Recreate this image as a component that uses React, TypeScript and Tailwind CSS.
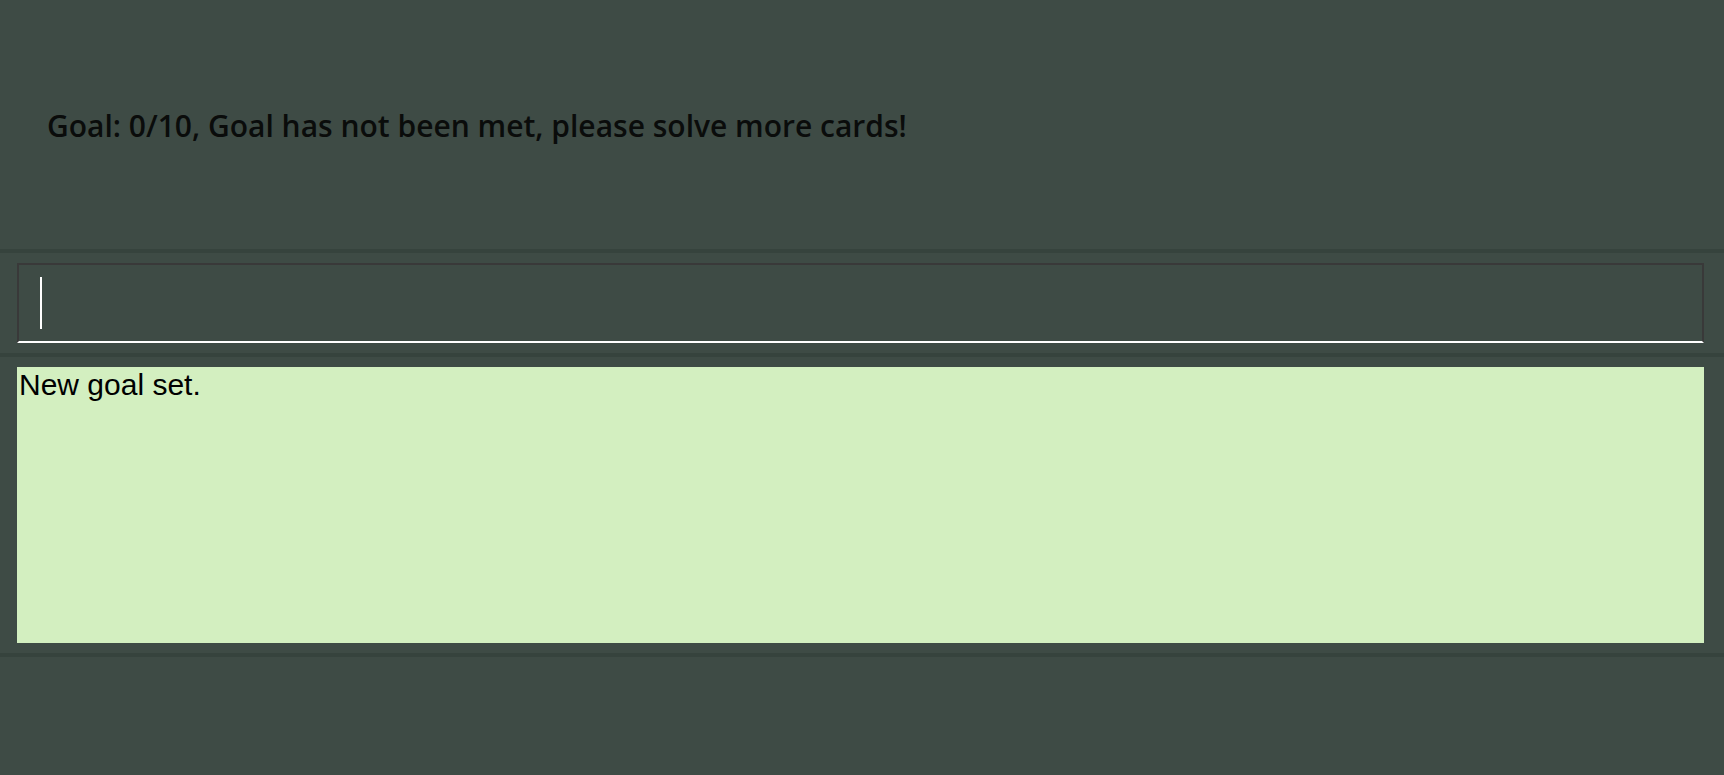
import React from 'react';

const Divider: React.FC = () => <div className="h-[4px] w-full bg-[#36433d]" />;

const App: React.FC = () => {
  return (
    <div className="flex h-[775px] w-full flex-col bg-[#3e4b45]">
      {/* goal status */}
      <div className="flex h-[249px] items-center pl-[47px] pt-[2px]">
        <h1
          className="text-[30px] font-semibold leading-none text-[#0a0c0b]"
          style={{ fontFamily: '"Open Sans", "Noto Sans", sans-serif' }}
        >
          Goal: 0/10, Goal has not been met, please solve more cards!
        </h1>
      </div>
      <Divider />

      {/* command input */}
      <div className="h-[100px] pl-[17px] pr-[20px] py-[10px]">
        <div className="relative flex h-full items-center border-x-2 border-t-2 border-b-2 border-x-[#393939] border-t-[#393939] border-b-white pl-[21px]">
          <div className="h-[52px] w-[2px] bg-white" />
        </div>
      </div>
      <Divider />

      {/* result display */}
      <div className="h-[296px] pl-[17px] pr-[20px] py-[10px]">
        <div
          className="h-full bg-[#d3efc0] pl-[2px] pt-[1px] text-[30px] leading-[34px] text-black"
          style={{ fontFamily: '"Liberation Sans", Arial, sans-serif' }}
        >
          New goal set.
        </div>
      </div>
      <Divider />
      <div className="flex-1" />
    </div>
  );
};

export default App;
